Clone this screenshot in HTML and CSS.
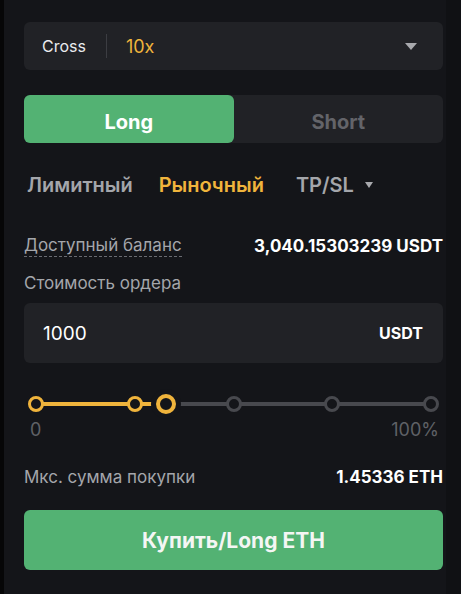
FILE: index.html
```html
<!DOCTYPE html>
<html lang="ru">
<head>
  <meta charset="UTF-8">
  <meta name="viewport" content="width=device-width, initial-scale=1.0">
  <title>Ордер</title>
  <link rel="stylesheet" href="styles.css">
</head>
<body>
  <div class="panel">
    <div class="margin-box">
      <span class="margin-mode">Cross</span>
      <span class="margin-divider"></span>
      <span class="leverage">10x</span>
      <span class="caret"></span>
    </div>

    <div class="side-switch">
      <button class="side-button side-long">Long</button>
      <button class="side-button side-short">Short</button>
    </div>

    <div class="order-types">
      <span class="order-type">Лимитный</span>
      <span class="order-type order-type-active">Рыночный</span>
      <span class="order-type order-type-tpsl">TP/SL <span class="caret caret-small"></span></span>
    </div>

    <div class="info-row">
      <span class="info-label info-label-dashed">Доступный баланс</span>
      <span class="info-value">3,040.15303239 USDT</span>
    </div>

    <div class="field-label">Стоимость ордера</div>

    <div class="amount-box">
      <span class="amount-value">1000</span>
      <span class="amount-unit">USDT</span>
    </div>

    <div class="slider">
      <div class="slider-track">
        <div class="slider-fill" style="width: 33%"></div>
        <span class="slider-dot slider-dot-on" style="left: 0%"></span>
        <span class="slider-dot slider-dot-on" style="left: 25%"></span>
        <span class="slider-dot" style="left: 50%"></span>
        <span class="slider-dot" style="left: 75%"></span>
        <span class="slider-dot" style="left: 100%"></span>
        <span class="slider-thumb" style="left: 33%"></span>
      </div>
      <div class="slider-labels">
        <span>0</span>
        <span>100%</span>
      </div>
    </div>

    <div class="info-row info-row-max">
      <span class="info-label">Мкс. сумма покупки</span>
      <span class="info-value">1.45336 ETH</span>
    </div>

    <button class="buy-button">Купить/Long ETH</button>
  </div>
</body>
</html>
```

FILE: styles.css
```css
body {
  margin: 0;
  background-color: #141519;
  font-family: Inter, "Noto Sans", Arial, sans-serif;
  color: #eaecef;
  height: 594px;
  overflow: hidden;
  border-left: 4px solid #060607;
  border-right: 15px solid #101114;
}

.panel {
  padding: 22px 3px 0 20px;
}

.margin-box {
  display: flex;
  align-items: center;
  height: 48px;
  padding: 0 18px;
  background-color: #212226;
  border-radius: 6px;
}

.margin-mode {
  font-size: 16px;
  color: #eaecef;
}

.margin-divider {
  width: 1px;
  height: 24px;
  background-color: #3c3d42;
  margin: 0 19px 0 20px;
}

.leverage {
  font-size: 18px;
  color: #f0b43c;
  flex: 1;
}

.caret {
  width: 0;
  height: 0;
  border-left: 6px solid transparent;
  border-right: 6px solid transparent;
  border-top: 7px solid #a8a9ad;
  margin-right: 8px;
}

.caret-small {
  display: inline-block;
  border-left-width: 4px;
  border-right-width: 4px;
  border-top-width: 6px;
  vertical-align: middle;
  margin: 0 0 3px 6px;
}

.side-switch {
  display: flex;
  margin-top: 25px;
  height: 48px;
  background-color: #212226;
  border-radius: 6px;
}

.side-button {
  flex: 1;
  border: none;
  padding: 6px 0 0 0;
  background-color: transparent;
  font-family: inherit;
  font-size: 20px;
  font-weight: bold;
  color: #636469;
  border-radius: 6px;
  cursor: pointer;
}

.side-long {
  background-color: #53b273;
  color: #ffffff;
}

.order-types {
  display: flex;
  align-items: center;
  gap: 26px;
  margin-top: 29px;
  padding-left: 3px;
  height: 26px;
}

.order-type {
  font-size: 20px;
  font-weight: 600;
  color: #a4a6ab;
}

.order-type-active {
  color: #f0b43c;
}

.order-type-tpsl {
  margin-left: 6px;
}

.info-row {
  display: flex;
  justify-content: space-between;
  align-items: center;
  margin-top: 36px;
  height: 24px;
}

.info-label {
  font-size: 17px;
  color: #a4a6ab;
}

.info-label-dashed {
  border-bottom: 1px dashed #6a6c72;
  line-height: 21px;
}

.info-value {
  font-size: 17px;
  font-weight: bold;
  color: #ffffff;
}

.field-label {
  margin-top: 13px;
  font-size: 17px;
  color: #a4a6ab;
  height: 24px;
  line-height: 24px;
}

.amount-box {
  display: flex;
  justify-content: space-between;
  align-items: center;
  margin-top: 8px;
  height: 60px;
  padding: 0 20px 0 19px;
  background-color: #212226;
  border-radius: 6px;
}

.amount-value {
  font-size: 19px;
  color: #ffffff;
}

.amount-unit {
  font-size: 16px;
  font-weight: bold;
  color: #ffffff;
}

.slider {
  margin-top: 39px;
  padding: 0 12px 0 12px;
}

.slider-track {
  position: relative;
  height: 4px;
  background-color: #48494e;
}

.slider-fill {
  height: 4px;
  background-color: #f0b43c;
}

.slider-dot {
  position: absolute;
  top: 50%;
  width: 10px;
  height: 10px;
  border: 3px solid #48494e;
  border-radius: 50%;
  background-color: #141519;
  transform: translate(-50%, -50%);
}

.slider-dot-on {
  border-color: #f0b43c;
}

.slider-thumb {
  position: absolute;
  top: 50%;
  width: 12px;
  height: 12px;
  border: 4px solid #f0b43c;
  border-radius: 50%;
  background-color: #141519;
  box-shadow: 0 0 0 5px #141519;
  transform: translate(-50%, -50%);
}

.slider-labels {
  display: flex;
  justify-content: space-between;
  margin: 13px -8px 0 -6px;
  font-size: 18px;
  color: #5f6166;
}

.info-row-max {
  margin-top: 25px;
}

.buy-button {
  display: block;
  width: 100%;
  margin-top: 21px;
  height: 60px;
  border: none;
  border-radius: 6px;
  background-color: #53b273;
  font-family: inherit;
  font-size: 21px;
  font-weight: bold;
  color: #f4f6f4;
  cursor: pointer;
}
```
